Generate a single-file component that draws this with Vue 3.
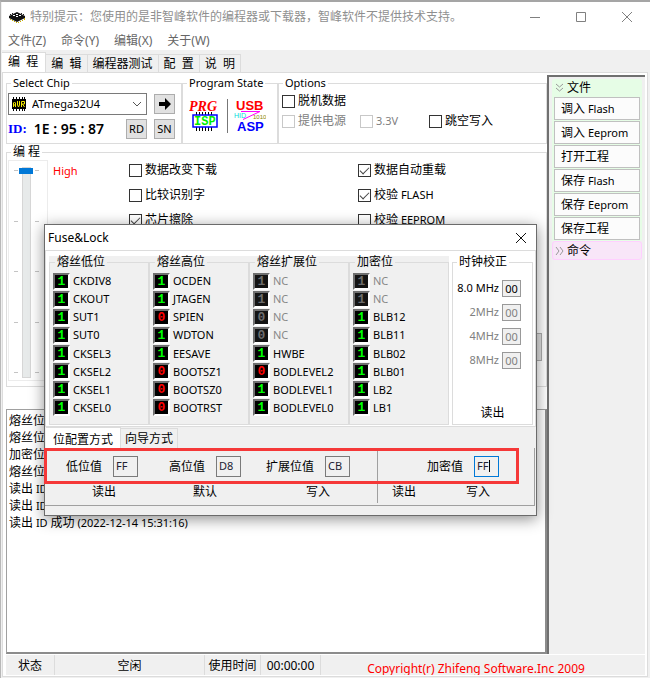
<script setup>
import { ref } from 'vue'

const menus = ['文件(Z)', '命令(Y)', '编辑(X)', '关于(W)']
const tabs = ['编  程', '编  辑', '编程器测试', '配  置', '说  明']
const fileActions = ['调入 Flash', '调入 Eeprom', '打开工程', '保存 Flash', '保存 Eeprom', '保存工程']

const checkColumns = [
  [
    { label: '数据改变下载', on: false },
    { label: '比较识别字', on: false },
    { label: '芯片擦除', on: true },
  ],
  [
    { label: '数据自动重载', on: true },
    { label: '校验 FLASH', on: true },
    { label: '校验 EEPROM', on: false },
  ],
]

const bit = (name, value = 1) => ({ name, value })
const fuseGroups = ref([
  {
    title: '熔丝低位',
    bits: [bit('CKDIV8'), bit('CKOUT'), bit('SUT1'), bit('SUT0'), bit('CKSEL3'), bit('CKSEL2'), bit('CKSEL1'), bit('CKSEL0')],
  },
  {
    title: '熔丝高位',
    bits: [bit('OCDEN'), bit('JTAGEN'), bit('SPIEN', 0), bit('WDTON'), bit('EESAVE'), bit('BOOTSZ1', 0), bit('BOOTSZ0', 0), bit('BOOTRST', 0)],
  },
  {
    title: '熔丝扩展位',
    bits: [bit('NC'), bit('NC'), bit('NC', 0), bit('NC', 0), bit('HWBE'), bit('BODLEVEL2', 0), bit('BODLEVEL1'), bit('BODLEVEL0')],
  },
  {
    title: '加密位',
    bits: [bit('NC'), bit('NC'), bit('BLB12'), bit('BLB11'), bit('BLB02'), bit('BLB01'), bit('LB2'), bit('LB1')],
  },
])
const clocks = [
  { label: '8.0 MHz', off: false },
  { label: '2MHz', off: true },
  { label: '4MHz', off: true },
  { label: '8MHz', off: true },
]
const fuseValues = [
  { label: '低位值', value: 'FF' },
  { label: '高位值', value: 'D8' },
  { label: '扩展位值', value: 'CB' },
]
const log = ['熔丝位', '熔丝位', '加密位', '熔丝位', '读出 ID', '读出 ID', '读出 ID 成功 (2022-12-14 15:31:16)']

// Splits a label into runs so that Latin text can be set one size smaller than Chinese.
const runs = (text) => text.match(/[\x20-\x7e]+|[^\x20-\x7e]+/g).map((t) => ({ t, latin: t.charCodeAt(0) < 127 }))

const toggle = (b) => {
  if (b.name !== 'NC') b.value = b.value ? 0 : 1
}
</script>

<template>
  <div class="window">
    <header class="titlebar">
      <svg class="app-icon" viewBox="0 0 16 13" width="16" height="13" aria-hidden="true">
        <path d="M0 5 8 1l8 4v2l-8 4-8-4z" fill="#111" />
        <path d="M1.500 8v1M3.500 9v1M5.500 10v1M7.500 11v1M9.500 11v1M11.500 10v1M13.500 9v1M15.500 7v2" stroke="#c9b000" />
        <path d="M1.500 3v1M3.500 2v1M12.500 2v1M14.500 3v1" stroke="#222" />
        <path d="M4 4.500h2M7 3.500h2M7 5.500h2M10 4.500h2" stroke="#fff" />
      </svg>
      <h1>特别提示：您使用的是非智峰软件的编程器或下载器，智峰软件不提供技术支持。</h1>
      <div class="caption">
        <button aria-label="最小化"><svg width="12" height="12"><path d="M1 6.500h10" /></svg></button>
        <button aria-label="最大化"><svg width="12" height="12"><path d="M1.500 1.500h9v9h-9z" /></svg></button>
        <button aria-label="关闭"><svg width="12" height="12"><path d="m1 1 10 10M11 1 1 11" /></svg></button>
      </div>
    </header>

    <nav class="menubar">
      <button v-for="m in menus" :key="m">{{ m }}</button>
    </nav>

    <div class="tabs" role="tablist">
      <button v-for="(t, i) in tabs" :key="t" role="tab" :class="{ active: i === 0 }">{{ t }}</button>
    </div>

    <main class="page">
      <div class="columns">
        <div class="workspace">
          <div class="top-groups">
            <fieldset class="group chip">
              <legend>Select Chip</legend>
              <div class="chip-row">
                <div class="combo">
                  <svg viewBox="0 0 16 14" width="16" height="14" aria-hidden="true">
                    <path d="M2.500 0v14M5.500 0v14M8.500 0v14M11.500 0v14M13.500 0v14" stroke="#000" />
                    <rect y="2" x="1" width="14" height="10" fill="#000" />
                    <path d="M2.500 10V6l1-1 1 1v4M2.500 8h2M6.500 4v4l1 2 1-2V4M10.500 10V4.500h3V7h-3m1 0 2 3" stroke="#f4e900" fill="none" />
                  </svg>
                  <select aria-label="Select Chip"><option>ATmega32U4</option></select>
                  <svg width="10" height="6" class="chevron" aria-hidden="true"><path d="m1 1 4 4 4-4" /></svg>
                </div>
                <button class="btn small" aria-label="确定">
                  <svg width="12" height="12" aria-hidden="true"><path d="M0 4h6V0l6 6-6 6V8H0z" /></svg>
                </button>
              </div>
              <div class="chip-row">
                <p class="chip-id"><b>ID:</b><span>1E : 95 : 87</span></p>
                <button class="btn small">RD</button>
                <button class="btn small">SN</button>
              </div>
            </fieldset>

            <fieldset class="group state">
              <legend>Program State</legend>
              <div class="state-icons">
                <svg viewBox="0 0 32 34" width="32" height="34">
                  <text x="0" y="12" class="prg">PRG</text>
                  <path d="M7.500 13v19M10.500 13v19M13.500 13v19M16.500 13v19M19.500 13v19M22.500 13v19" stroke="#000" />
                  <rect x="4" y="16" width="24" height="12" fill="#fff" stroke="#00f" stroke-width="1.500" />
                  <text x="5" y="26" class="isp">ISP</text>
                </svg>
                <i></i>
                <svg viewBox="0 0 32 34" width="32" height="34">
                  <text x="2" y="11" class="usb">USB</text>
                  <path d="M7 12.500h19L9 20.500" stroke="#f0f" fill="none" />
                  <text x="0" y="19" class="hid">HID</text>
                  <text x="19" y="20" class="bin">1010</text>
                  <text x="3" y="32" class="asp">ASP</text>
                </svg>
              </div>
            </fieldset>

            <fieldset class="group options">
              <legend>Options</legend>
              <label class="check"><input type="checkbox" />脱机数据</label>
              <div class="option-row">
                <label class="check off"><input type="checkbox" disabled />提供电源</label>
                <label class="check off"><input type="checkbox" disabled /><span class="latin">3.3V</span></label>
                <label class="check"><input type="checkbox" />跳空写入</label>
              </div>
            </fieldset>
          </div>

          <fieldset class="group program">
            <legend>编  程</legend>
            <div class="speed">
              <div class="ticks"><i v-for="n in 5" :key="n"></i></div>
              <input type="range" min="0" max="4" value="0" aria-label="速度" />
              <div class="ticks"><i v-for="n in 5" :key="n"></i></div>
            </div>
            <span class="speed-label">High</span>
            <div v-for="(column, i) in checkColumns" :key="i" class="checks">
              <label v-for="c in column" :key="c.label" class="check">
                <input type="checkbox" :checked="c.on" />
                <span class="mixed"><span v-for="(r, k) in runs(c.label)" :key="k" :class="{ latin: r.latin }">{{ r.t }}</span></span>
              </label>
            </div>
            <span class="program-edge"></span>
          </fieldset>

          <div class="log">
            <p v-for="(line, i) in log" :key="i" class="mixed"><span v-for="(r, k) in runs(line)" :key="k" :class="{ latin: r.latin }">{{ r.t }}</span></p>
          </div>
        </div>

        <aside class="side">
          <section class="file-section">
            <h2>
              <svg width="9" height="10" aria-hidden="true"><path d="m1 1 3.500 3L8 1M1 5l3.500 3L8 5" /></svg>文件
            </h2>
            <button v-for="a in fileActions" :key="a" class="mixed"><span v-for="(r, k) in runs(a)" :key="k" :class="{ latin: r.latin }">{{ r.t }}</span></button>
          </section>
          <section class="command-section">
            <h2>
              <svg width="9" height="10" aria-hidden="true"><path d="m1 1 3 4-3 4M5 1l3 4-3 4" /></svg>命令
            </h2>
          </section>
        </aside>
      </div>

      <footer class="status">
        <span class="s-state">状态</span>
        <span class="s-idle">空闲</span>
        <span class="s-used">使用时间</span>
        <span class="s-time">00:00:00</span>
        <span class="s-copy">Copyright(r) Zhifeng Software.Inc 2009</span>
      </footer>
    </main>

    <div class="dialog" role="dialog" aria-label="Fuse&amp;Lock">
      <header class="dialog-title">
        <span>Fuse&amp;Lock</span>
        <button aria-label="关闭窗口"><svg width="12" height="12"><path d="m1 1 10 10M11 1 1 11" /></svg></button>
      </header>

      <div class="fuses">
        <fieldset v-for="g in fuseGroups" :key="g.title" class="group fuse">
          <legend>{{ g.title }}</legend>
          <label v-for="(b, i) in g.bits" :key="i" :class="{ nc: b.name === 'NC' }">
            <button :class="['bit', b.value ? 'one' : 'zero']" @click="toggle(b)">{{ b.value }}</button>{{ b.name }}
          </label>
        </fieldset>
        <fieldset class="group clock">
          <legend>时钟校正</legend>
          <label v-for="c in clocks" :key="c.label" :class="{ off: c.off }">
            {{ c.label }}<input value="00" :disabled="c.off" />
          </label>
          <button class="flat">读出</button>
        </fieldset>
      </div>

      <div class="mode-tabs" role="tablist">
        <button role="tab" class="active">位配置方式</button>
        <button role="tab">向导方式</button>
      </div>

      <div class="values">
        <div class="fuse-side">
          <div class="value-row">
            <label v-for="v in fuseValues" :key="v.label">{{ v.label }}<input :value="v.value" /></label>
          </div>
          <div class="action-row">
            <button class="flat">读出</button>
            <button class="flat">默认</button>
            <button class="flat">写入</button>
          </div>
        </div>
        <div class="lock-side">
          <div class="value-row">
            <label>加密值<span class="focused"><input value="FF" /><i class="caret"></i></span></label>
          </div>
          <div class="action-row">
            <button class="flat">读出</button>
            <button class="flat">写入</button>
          </div>
        </div>
        <div class="highlight"></div>
      </div>
    </div>
  </div>
</template>

<style>
body {
  margin: 0;
}
</style>

<style scoped>
* {
  box-sizing: border-box;
}
.window {
  position: relative;
  display: flex;
  flex-direction: column;
  min-height: 100vh;
  padding: 0 2px 1px 1px;
  border-top: 2px solid #a5a5a5;
  border-left: 1px solid #b8b8b8;
  background: #f0f0f0;
  color: #000;
  font: 11px/16px "Noto Sans", "Noto Sans CJK SC", sans-serif;
}
button,
input,
select {
  margin: 0;
  padding: 0;
  border: 0;
  border-radius: 0;
  background: none;
  color: inherit;
  font: inherit;
}
h1,
h2,
p {
  margin: 0;
  font: inherit;
}
svg {
  display: block;
  flex: none;
}
.mixed {
  font-size: 12px;
  white-space: pre;
}
.latin {
  font-size: 11px;
}

.titlebar {
  display: flex;
  align-items: center;
  height: 30px;
  margin-right: -2px;
  padding-left: 7px;
  background: #fff;
}
.titlebar h1 {
  flex: 1;
  margin-left: 5px;
  color: #8f8f8f;
  font-size: 12px;
  white-space: nowrap;
}
.caption {
  display: flex;
}
.caption button {
  display: grid;
  place-items: center;
  width: 46px;
  height: 28px;
}
.caption svg,
.dialog-title svg {
  fill: none;
  stroke: #808080;
}
.menubar {
  display: flex;
  gap: 15px;
  height: 18px;
  margin-right: -2px;
  padding-left: 6px;
  background: #fff;
  color: #666;
  font-size: 12px;
}
.menubar button {
  line-height: 18px;
}

.tabs {
  display: flex;
  align-items: flex-end;
  height: 22px;
  padding-top: 2px;
}
.tabs button {
  height: 18px;
  padding: 1px 5px 0;
  border: 1px solid #dcdcdc;
  border-width: 1px 1px 0 0;
  line-height: 16px;
  white-space: pre;
}
.tabs button.active {
  height: 20px;
  padding: 0 7px 2px 6px;
  background: #fff;
}
.page {
  flex: 1;
  display: flex;
  flex-direction: column;
  padding: 2px 2px 1px 3px;
  border: 1px solid #dcdcdc;
  background: #fff;
}
.columns {
  flex: 1;
  display: flex;
}
.workspace {
  flex: 1;
  display: flex;
  flex-direction: column;
}
.group {
  min-width: 0;
  margin: 0;
  padding: 0;
  border: 1px solid #dcdcdc;
}
.group legend {
  margin-left: 4px;
  padding: 0 2px;
  line-height: 16px;
}
.top-groups {
  display: flex;
  height: 69px;
}
.chip {
  width: 176px;
}
.chip-row {
  display: flex;
  align-items: center;
  gap: 7px;
  height: 25px;
  padding: 0 6px 0 1px;
}
.combo {
  flex: 1;
  display: flex;
  align-items: center;
  height: 22px;
  padding: 0 4px 0 2px;
  border: 1px solid #7a7a7a;
}
.combo select {
  flex: 1;
  margin-left: 5px;
  appearance: none;
}
.chevron {
  fill: none;
  stroke: #555;
}
.btn {
  display: grid;
  place-items: center;
  border: 1px solid #adadad;
  background: #e1e1e1;
}
.small {
  width: 21px;
  height: 20px;
}
.chip-id {
  flex: 1;
  display: flex;
  align-items: center;
  gap: 7px;
  font-size: 14px;
  font-weight: 600;
  white-space: nowrap;
}
.chip-id b {
  color: #00f;
  font-family: "Liberation Serif", serif;
  font-size: 13px;
}
.state {
  width: 96px;
}
.state-icons {
  display: flex;
  align-items: center;
  gap: 6px;
  padding: 8px 0 0 6px;
}
.state-icons i {
  width: 1px;
  height: 34px;
  background: #777;
}
.prg {
  fill: #f00;
  font: italic bold 14px "Liberation Serif", serif;
}
.isp {
  fill: #0e0;
  font: bold 12px "Liberation Mono", monospace;
}
.usb {
  fill: #f00;
  font: bold 13px "Liberation Sans", sans-serif;
}
.asp {
  fill: #00f;
  font: bold 13px "Liberation Sans", sans-serif;
}
.hid {
  fill: #0dd;
  font: 7px "Liberation Sans", sans-serif;
}
.bin {
  fill: #880;
  font: 6px "Liberation Sans", sans-serif;
}
.options {
  flex: 1;
}
.options .check {
  height: 20px;
  padding-left: 3px;
}
.option-row {
  display: grid;
  grid-template-columns: 78px 69px 1fr;
}
.check {
  display: flex;
  align-items: center;
  gap: 3px;
  font-size: 12px;
  white-space: nowrap;
}
.check input {
  flex: none;
  width: 13px;
  height: 13px;
  border: 1px solid #333;
  appearance: none;
}
.check input:checked::before {
  content: "";
  display: block;
  width: 8px;
  height: 4px;
  margin: 2px 0 0 1px;
  border: solid #444;
  border-width: 0 0 1px 1px;
  transform: rotate(-45deg);
}
.off {
  color: #808080;
}
.check.off input {
  border-color: #c8c8c8;
}
.program {
  position: relative;
  display: grid;
  grid-template-columns: 41px 80px 229px 1fr;
  height: 243px;
}
.tabs,
.program legend,
.fuse legend,
.clock legend {
  font-size: 12px;
  white-space: pre;
}
.speed {
  display: flex;
  justify-content: space-between;
  height: 221px;
  margin-left: 1px;
  padding: 6px 8px 4px 5px;
  border: 1px solid #ececec;
}
.ticks {
  display: flex;
  flex-direction: column;
  justify-content: space-between;
  padding: 3px 0;
}
.ticks i {
  width: 4px;
  height: 1px;
  background: #c4c4c4;
}
.speed input {
  width: 14px;
  height: 211px;
  appearance: none;
  writing-mode: vertical-lr;
}
.speed input::-webkit-slider-runnable-track {
  width: 9px;
  margin: 0 auto;
  border: 1px solid #d6d6d6;
  background: #e7eaea;
}
.speed input::-webkit-slider-thumb {
  width: 14px;
  height: 6px;
  margin-left: -4px;
  background: #0078d7;
  appearance: none;
}
.speed-label {
  padding: 3px 5px;
  color: #f00;
  font-size: 11px;
}
.checks {
  display: flex;
  flex-direction: column;
  gap: 9px;
  padding: 2px 0 0 1px;
}
.program-edge {
  position: absolute;
  right: 4px;
  bottom: 20px;
  width: 20px;
  height: 28px;
  border: 1px solid #adadad;
  background: #e1e1e1;
}
.log {
  flex: 1;
  margin-top: 22px;
  padding: 2px 2px 3px;
  border: 1px solid #a0a0a0;
  border-right: 2px solid #8c8c8c;
  border-bottom: 2px solid #8c8c8c;
}
.log p {
  height: 17px;
  line-height: 17px;
}
.side {
  width: 98px;
  padding: 2px 3px;
  border: solid #707070;
  border-width: 2px 0 0 2px;
  background: #f0f0f0;
}
.side section {
  display: flex;
  flex-direction: column;
  gap: 1px;
  padding: 0 2px 1px;
  border-radius: 3px;
}
.side h2 {
  display: flex;
  align-items: center;
  gap: 3px;
  height: 17px;
  padding-left: 1px;
  font-size: 12px;
}
.side h2 svg {
  fill: none;
  stroke: #999;
}
.file-section {
  background: #e6fde6;
}
.side .command-section {
  padding: 0 1px;
  border: 1px solid #ffd0ff;
  background: #f8e6f8;
}
.side section button {
  height: 23px;
  padding-left: 6px;
  border: 1px solid #c0c0c0;
  background: #fcfcfc;
  text-align: left;
}
.status {
  display: flex;
  height: 20px;
  margin-top: 1px;
  background: #f0f0f0;
  overflow: hidden;
  font-size: 12px;
  line-height: 22px;
  text-align: center;
  white-space: nowrap;
}
.status span {
  border-right: 1px solid #dcdcdc;
}
.s-state {
  width: 49px;
}
.s-idle {
  width: 150px;
}
.s-used {
  width: 56px;
}
.s-time {
  width: 60px;
}
.status .s-copy {
  flex: 1;
  padding: 6px 14px 0 0;
  border: 0;
  color: #f00;
  line-height: 16px;
}

.dialog {
  position: absolute;
  top: 222px;
  left: 43px;
  width: 493px;
  border: 1px solid #6b6b6b;
  background: #f0f0f0;
  box-shadow: 0 3px 14px rgba(0, 0, 0, 0.45);
}
.dialog-title {
  display: flex;
  align-items: center;
  justify-content: space-between;
  height: 25px;
  padding: 0 9px 0 3px;
  background: #fff;
  font-size: 12px;
}
.dialog-title svg {
  stroke: #111;
}
.fuses {
  display: flex;
  height: 177px;
  padding: 3px 2px 1px 3px;
  border: 1px solid #dcdcdc;
  background: #fff;
}
.fuse {
  flex: 1;
  display: flex;
  flex-direction: column;
  padding: 2px 0 7px 3px;
  background: #f0f0f0;
  box-shadow: 0 -6px #f0f0f0;
}
.fuse legend {
  margin-left: 2px;
}
.fuse label {
  flex: 1;
  display: flex;
  align-items: center;
  gap: 3px;
  min-height: 0;
}
.nc {
  color: #888;
}
.bit {
  width: 17px;
  height: 17px;
  border: 2px solid #707070;
  border-color: #707070 #fff #fff #707070;
  background: #000;
  font: bold 13px/13px "Liberation Mono", monospace;
  text-align: center;
}
.one {
  color: #0f0;
}
.zero {
  color: #f00;
}
.nc .bit {
  background: #141414;
  color: #6c6c6c;
}
.clock {
  display: flex;
  flex-direction: column;
  width: 81px;
  margin-left: 3px;
}
.clock label {
  display: flex;
  align-items: center;
  justify-content: flex-end;
  gap: 3px;
  height: 24px;
  padding-right: 11px;
}
.clock label:first-of-type {
  margin-top: 6px;
}
.clock input {
  width: 19px;
  height: 17px;
  border: 1px solid #999;
  background: #f0f0f0;
  text-align: center;
}
.flat {
  width: 24px;
  font-size: 12px;
}
.clock .flat {
  margin: auto auto 3px;
}
.mode-tabs {
  display: flex;
  align-items: flex-end;
  height: 21px;
  padding-left: 1px;
  font-size: 12px;
}
.mode-tabs button {
  height: 20px;
  padding: 0 4px;
  border: 1px solid #dcdcdc;
  border-width: 1px 1px 0 0;
}
.mode-tabs .active {
  height: 21px;
  padding: 4px 7px 0;
  background: #fff;
}
.values {
  position: relative;
  display: flex;
  height: 58px;
  margin: 0 1px 9px 0;
  border: solid #a0a0a0;
  border-width: 0 1px 1px 0;
}
.fuse-side {
  display: flex;
  flex-direction: column;
  width: 333px;
  margin: 2px 0;
  border-right: 1px solid #a0a0a0;
}
.lock-side {
  flex: 1;
  margin: 2px 0;
}
.value-row {
  display: grid;
  align-items: center;
  height: 33px;
  font-size: 12px;
}
.value-row label {
  display: flex;
  align-items: center;
  gap: 11px;
}
.value-row input {
  width: 25px;
  height: 21px;
  padding: 0 0 2px 2px;
  border: 1px solid #7a7a7a;
  background: #f0f0f0;
  color: #223;
  font-size: 11px;
}
.action-row {
  display: grid;
  padding-top: 1px;
}
.fuse-side .value-row {
  grid-template-columns: 103px 97px 1fr;
  padding-left: 21px;
}
.fuse-side .action-row {
  grid-template-columns: 101px 113px 1fr;
  padding-left: 47px;
}
.lock-side .value-row {
  padding-left: 49px;
}
.lock-side .action-row {
  grid-template-columns: 74px 1fr;
  padding-left: 14px;
}
.focused {
  position: relative;
  display: flex;
}
.focused input {
  border-color: #0078d7;
}
.caret {
  position: absolute;
  top: 4px;
  left: 15px;
  width: 1px;
  height: 12px;
  background: #000;
}
.highlight {
  position: absolute;
  top: 0;
  left: -1px;
  right: 15px;
  height: 36px;
  border: 3px solid #f53838;
  pointer-events: none;
}
</style>
